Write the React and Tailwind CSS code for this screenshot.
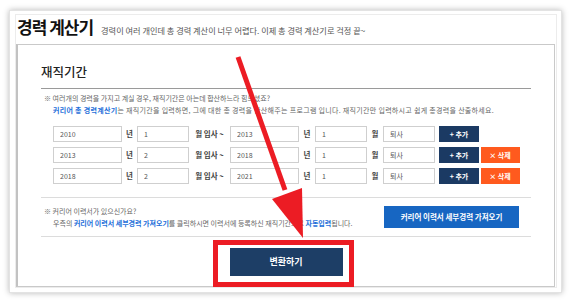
import React from "react";

const rows = [
  { y1: "2010", m1: "1", y2: "2013", m2: "1", del: false },
  { y1: "2013", m1: "2", y2: "2018", m2: "1", del: true },
  { y1: "2018", m1: "2", y2: "2021", m2: "1", del: true },
];

const Field = ({ value, w }) => (
  <input
    readOnly
    value={value}
    className={`${w} h-[16px] border border-[#cfcfcf] bg-white pl-[6px] text-[7px] text-[#555] outline-none`}
  />
);

const PeriodRow = ({ row }) => (
  <div className="flex items-center h-[16px] ml-[12px]">
    <Field value={row.y1} w="w-[69px]" />
    <span className="w-[15px] text-center text-[7.5px] font-bold text-[#444]">년</span>
    <Field value={row.m1} w="w-[52px]" />
    <span className="w-[41px] text-center text-[7.5px] font-bold text-[#444]">월 입사 ~</span>
    <Field value={row.y2} w="w-[69px]" />
    <span className="w-[16px] text-center text-[7.5px] font-bold text-[#444]">년</span>
    <Field value={row.m2} w="w-[52px]" />
    <span className="w-[16px] text-center text-[7.5px] font-bold text-[#444]">월</span>
    <Field value="퇴사" w="w-[52px]" />
    <button className="ml-[4px] w-[40px] h-[16px] bg-[#1b3a63] text-white text-[7px] font-bold">
      + 추가
    </button>
    {row.del && (
      <button className="ml-[1.5px] w-[39px] h-[16px] bg-[#ff5a1e] text-white text-[7px] font-bold">
        × 삭제
      </button>
    )}
  </div>
);

export default function App() {
  return (
    <div className="relative w-[572px] h-[303px] overflow-hidden bg-white font-['Noto_Sans_CJK_KR',sans-serif]">
      {/* outer card */}
      <div className="ml-[9px] mt-[10px] w-[553px] h-[283px] border border-[#e3e3e3] bg-white shadow-[0_0_6px_rgba(0,0,0,0.28)] pt-[3px] pl-[5px] pr-[4px]">
        <div className="w-[542px] h-[274px] border border-[#ececec]">
          {/* header */}
          <div className="h-[29px] flex items-baseline pt-[1px]">
            <h1 className="text-[17px] leading-[22px] font-bold tracking-[-1px] text-[#111] ml-[1px]">
              경력 계산기
            </h1>
            <span className="ml-[8px] text-[8.2px] text-[#555]">
              경력이 여러 개인데 총 경력 계산이 너무 어렵다. 이제 총 경력 계산기로 걱정 끝~
            </span>
          </div>

          {/* content box */}
          <div className="w-[539px] h-[243px] border border-[#c9c9c9] border-l-2 border-l-[#c2c2c2] px-[23px]">
            <div className="pt-[19px] pb-[8px] border-b border-[#9a9a9a]">
              <h2 className="text-[12.5px] leading-[16px] font-medium text-[#222]">재직기간</h2>
            </div>

            <div className="mt-[3px] pl-[3px] text-[7px] leading-[12px] text-[#666]">
              <p>※ 여러개의 경력을 가지고 계실 경우, 재직기간은 아는데 합산하느라 힘드셨죠?</p>
              <p className="pl-[9px] tracking-[0.3px]">
                <span className="font-bold text-[#1e6fd9]">커리어 총 경력계산기</span>는 재직기간을 입력하면, 그에 대한 총
                경력을 합산해주는 프로그램 입니다. 재직기간만 입력하시고 쉽게 총경력을 산출하세요.
              </p>
            </div>

            <div className="mt-[10px] flex flex-col gap-[5px]">
              {rows.map((r, i) => (
                <PeriodRow key={i} row={r} />
              ))}
            </div>

            <div className="mt-[13px] border-t border-[#dcdcdc] h-[40px] flex items-center justify-between border-b">
              <div className="pl-[3px] text-[7px] leading-[12px] text-[#666]">
                <p>※ 커리어 이력서가 있으신가요?</p>
                <p className="pl-[9px]">
                  우측의 <span className="font-bold text-[#1e6fd9]">커리어 이력서 세부경력 가져오기</span>를 클릭하시면
                  이력서에 등록하신 재직기간으로 <span className="font-bold text-[#1e6fd9]">자동입력</span>됩니다.
                </p>
              </div>
              <button className="mr-[12px] w-[135px] h-[22px] bg-[#1766c2] text-white text-[7.5px] font-bold">
                커리어 이력서 세부경력 가져오기
              </button>
            </div>

            <div className="mt-[11px] flex justify-center">
              <button className="w-[113px] h-[28px] bg-[#1d3e66] text-white text-[9px] font-bold">
                변환하기
              </button>
            </div>
          </div>
        </div>
      </div>

      {/* red highlight box */}
      <div className="absolute left-[213px] top-[240px] w-[141px] h-[47px] border-[5px] border-[#ec1c24]" />

      {/* red arrow */}
      <svg className="absolute left-0 top-0 pointer-events-none" width="572" height="303" viewBox="0 0 572 303">
        <line x1="238" y1="57" x2="285" y2="190" stroke="#ec1c24" strokeWidth="5" />
        <polygon points="272,199 302,188 303,238" fill="#ec1c24" />
      </svg>
    </div>
  );
}
